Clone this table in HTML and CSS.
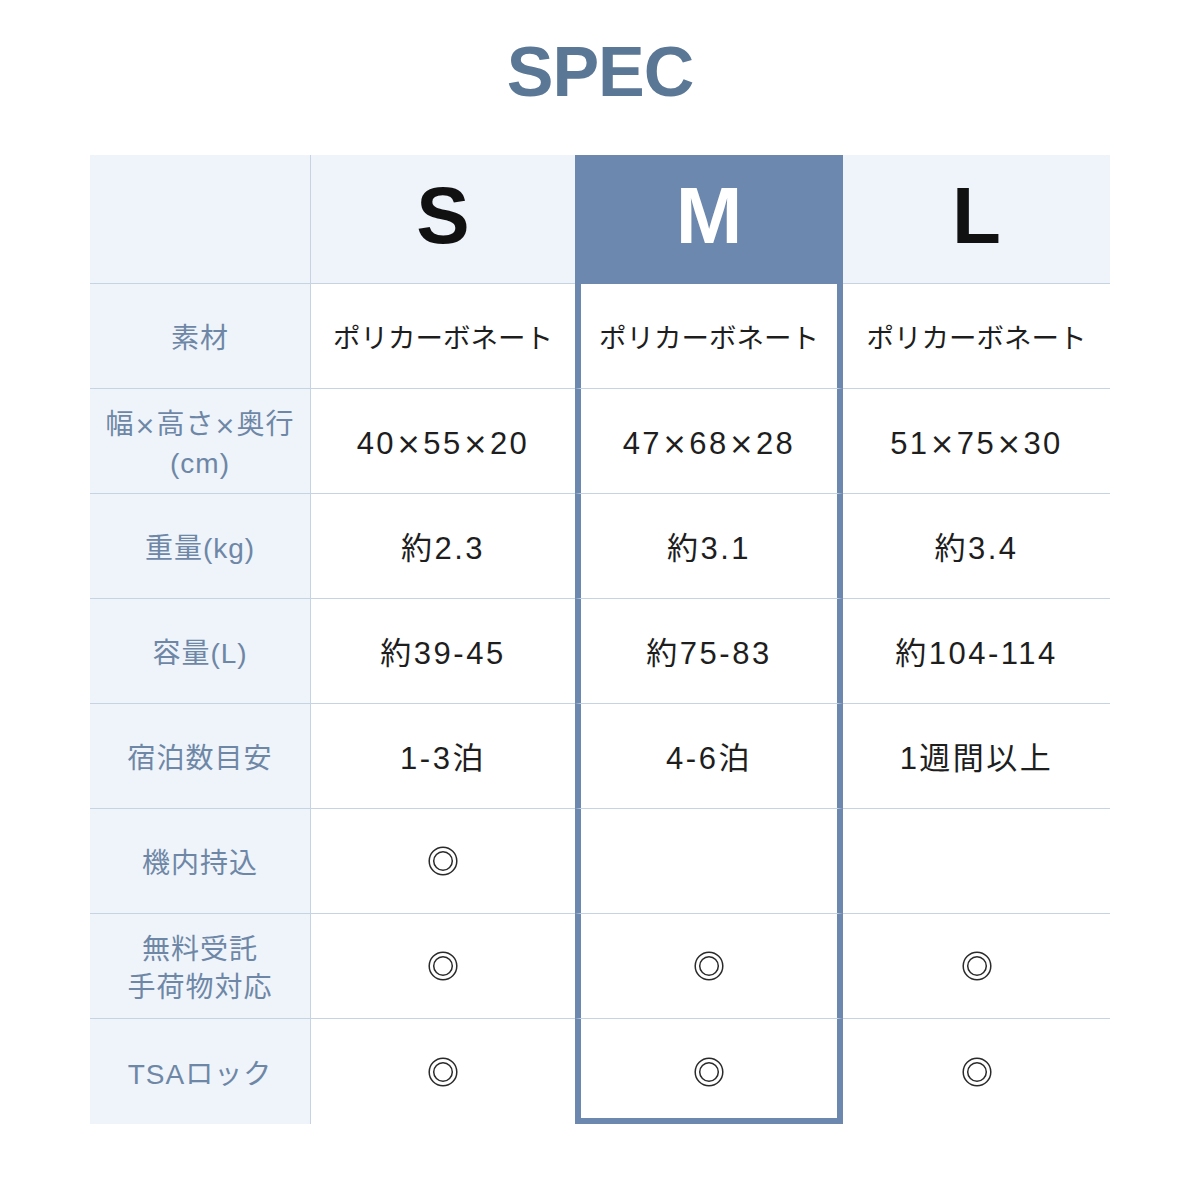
FILE: index.html
```html
<!DOCTYPE html>
<html lang="ja">
<head>
<meta charset="utf-8">
<title>SPEC</title>
<link rel="stylesheet" href="styles.css">
</head>
<body>
<div class="page">
  <h1 class="title">SPEC</h1>
  <div class="table">
    <div class="cell label head"></div>
    <div class="cell head size">S</div>
    <div class="cell head size m">M</div>
    <div class="cell head size">L</div>

    <div class="cell label">素材</div>
    <div class="cell data">ポリカーボネート</div>
    <div class="cell data m">ポリカーボネート</div>
    <div class="cell data">ポリカーボネート</div>

    <div class="cell label"><span class="t">幅<span class="lx">×</span>高さ<span class="lx">×</span>奥行<br>(cm)</span></div>
    <div class="cell data num"><span class="t">40<span class="x">×</span>55<span class="x">×</span>20</span></div>
    <div class="cell data num m"><span class="t">47<span class="x">×</span>68<span class="x">×</span>28</span></div>
    <div class="cell data num"><span class="t">51<span class="x">×</span>75<span class="x">×</span>30</span></div>

    <div class="cell label">重量(kg)</div>
    <div class="cell data num">約2.3</div>
    <div class="cell data num m">約3.1</div>
    <div class="cell data num">約3.4</div>

    <div class="cell label">容量(L)</div>
    <div class="cell data num">約39-45</div>
    <div class="cell data num m">約75-83</div>
    <div class="cell data num">約104-114</div>

    <div class="cell label">宿泊数目安</div>
    <div class="cell data num">1-3泊</div>
    <div class="cell data num m">4-6泊</div>
    <div class="cell data num">1週間以上</div>

    <div class="cell label">機内持込</div>
    <div class="cell mark"><svg class="dc" viewBox="0 0 30 30"><circle cx="15" cy="15" r="13.8"/><circle cx="15" cy="15" r="9.3"/></svg></div>
    <div class="cell mark m"></div>
    <div class="cell mark"></div>

    <div class="cell label"><span class="t">無料受託<br>手荷物対応</span></div>
    <div class="cell mark"><svg class="dc" viewBox="0 0 30 30"><circle cx="15" cy="15" r="13.8"/><circle cx="15" cy="15" r="9.3"/></svg></div>
    <div class="cell mark m"><svg class="dc" viewBox="0 0 30 30"><circle cx="15" cy="15" r="13.8"/><circle cx="15" cy="15" r="9.3"/></svg></div>
    <div class="cell mark"><svg class="dc" viewBox="0 0 30 30"><circle cx="15" cy="15" r="13.8"/><circle cx="15" cy="15" r="9.3"/></svg></div>

    <div class="cell label last">TSAロック</div>
    <div class="cell mark last"><svg class="dc" viewBox="0 0 30 30"><circle cx="15" cy="15" r="13.8"/><circle cx="15" cy="15" r="9.3"/></svg></div>
    <div class="cell mark m last"><svg class="dc" viewBox="0 0 30 30"><circle cx="15" cy="15" r="13.8"/><circle cx="15" cy="15" r="9.3"/></svg></div>
    <div class="cell mark last"><svg class="dc" viewBox="0 0 30 30"><circle cx="15" cy="15" r="13.8"/><circle cx="15" cy="15" r="9.3"/></svg></div>
  </div>
</div>
</body>
</html>
```
FILE: styles.css
```css
html, body {
  margin: 0;
  padding: 0;
  background: #ffffff;
}

.page {
  width: 1200px;
  padding-top: 37px;
  font-family: "Liberation Sans", "Noto Sans CJK JP", sans-serif;
}

.title {
  margin: 0;
  text-align: center;
  font-family: "Liberation Sans", Arial, sans-serif;
  font-weight: 700;
  font-size: 70px;
  line-height: 70px;
  letter-spacing: -1px;
  color: #5b7796;
}

.table {
  display: grid;
  grid-template-columns: 221px 264px 268px 267px;
  grid-template-rows: 129px repeat(8, 105px);
  width: 1020px;
  margin: 48px 0 0 90px;
}

.cell {
  box-sizing: border-box;
  display: flex;
  align-items: center;
  justify-content: center;
  text-align: center;
  border-bottom: 1px solid #c5d3e2;
}

.t {
  display: block;
}

.label {
  background: #eef4fa;
  border-right: 1px solid #c5d3e2;
  color: #6e87a6;
  font-family: "Liberation Sans", "Noto Sans CJK JP", sans-serif;
  font-size: 28px;
  line-height: 38px;
  letter-spacing: 1px;
  padding-top: 6px;
}

.lx {
  font-family: "DejaVu Sans", sans-serif;
  font-size: 25px;
  letter-spacing: 1px;
}

.head {
  background: #eef4fa;
  padding-top: 0;
}

.size {
  font-family: "Liberation Sans", Arial, sans-serif;
  font-weight: 700;
  font-size: 80px;
  line-height: 80px;
  color: #111111;
  padding-bottom: 6px;
}

.data {
  color: #1e1e1e;
  font-size: 27.5px;
  line-height: 36px;
  letter-spacing: 0;
  padding-top: 6px;
}

.num {
  font-size: 31px;
  letter-spacing: 2.5px;
}

.x {
  font-family: "DejaVu Sans", sans-serif;
  font-size: 30px;
  letter-spacing: 2px;
}

.m {
  border-left: 6px solid #6c88ae;
  border-right: 6px solid #6c88ae;
}

.m.head {
  background: #6c88ae;
  color: #ffffff;
  border-bottom-color: #6c88ae;
}

.last {
  border-bottom: none;
}

.m.last {
  border-bottom: 6px solid #6c88ae;
  padding-top: 6px;
}

.dc {
  width: 30px;
  height: 30px;
  fill: none;
  stroke: #2a2a2a;
  stroke-width: 1.5;
}
```
